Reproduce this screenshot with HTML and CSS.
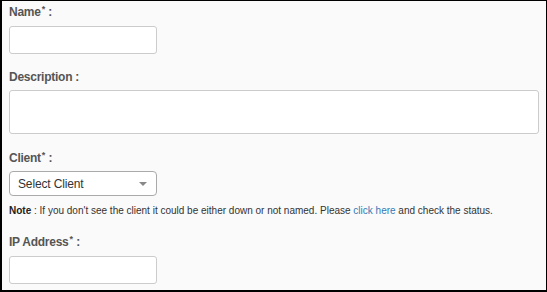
FILE: index.html
```html
<!DOCTYPE html>
<html>
<head>
<meta charset="utf-8">
<link rel="stylesheet" href="styles.css">
</head>
<body>
<div class="panel">
  <div class="field field-name">
    <label class="label">Name<sup class="req">*</sup> :</label>
    <input class="input" type="text">
  </div>
  <div class="field field-desc">
    <label class="label">Description :</label>
    <textarea class="textarea"></textarea>
  </div>
  <div class="field field-client">
    <label class="label">Client<sup class="req">*</sup> :</label>
    <div class="select">
      <span class="select-text">Select Client</span>
      <span class="caret"></span>
    </div>
    <p class="note"><b>Note</b> : If you don't see the client it could be either down or not named. Please <a class="link" href="#">click here</a> and check the status.</p>
  </div>
  <div class="field field-ip">
    <label class="label">IP Address<sup class="req">*</sup> :</label>
    <input class="input" type="text">
  </div>
</div>
</body>
</html>
```
FILE: styles.css
```css
html, body {
  margin: 0;
  padding: 0;
}
body {
  width: 547px;
  height: 292px;
  overflow: hidden;
  font-family: "Liberation Sans", Arial, sans-serif;
}
.panel {
  box-sizing: border-box;
  width: 547px;
  height: 292px;
  border-style: solid;
  border-color: #000;
  border-width: 1px 1px 2px 2px;
  background: #fafafa;
  padding: 4px 0 0 7px;
  display: flex;
  flex-direction: column;
}
.field {
  display: flex;
  flex-direction: column;
  align-items: flex-start;
}
.label {
  font-size: 12px;
  font-weight: bold;
  line-height: 14px;
  color: #555;
  letter-spacing: -0.25px;
  margin-bottom: 7px;
}
.req {
  font-size: 9px;
  line-height: 0;
  vertical-align: 4px;
  letter-spacing: 0;
  margin-left: 1px;
}
.input {
  box-sizing: border-box;
  width: 148px;
  height: 28px;
  margin: 0;
  border: 1px solid #ccc;
  border-radius: 3px;
  background: #fff;
  padding: 0 8px;
}
.field-desc {
  margin-top: 16px;
}
.field-desc .label {
  margin-bottom: 6px;
}
.textarea {
  box-sizing: border-box;
  width: 530px;
  height: 44px;
  margin: 0;
  border: 1px solid #ccc;
  border-radius: 3px;
  background: #fff;
  resize: none;
  display: block;
}
.field-client {
  margin-top: 17px;
}
.field-client .label {
  margin-bottom: 6px;
}
.select {
  box-sizing: border-box;
  width: 148px;
  height: 25px;
  border: 1px solid #aaa;
  border-radius: 4px;
  background: #fff;
  display: flex;
  align-items: center;
  justify-content: space-between;
  padding: 0 9px 0 8px;
}
.select-text {
  font-size: 12px;
  color: #333;
  letter-spacing: -0.15px;
}
.caret {
  width: 0;
  height: 0;
  border-left: 4px solid transparent;
  border-right: 4px solid transparent;
  border-top: 4px solid #888;
  margin-top: 1px;
}
.note {
  margin: 9px 0 0 0;
  font-size: 10px;
  line-height: 12px;
  color: #333;
}
.note b {
  color: #222;
}
.link {
  color: #337ab7;
  text-decoration: none;
}
.field-ip {
  margin-top: 18px;
}
```
